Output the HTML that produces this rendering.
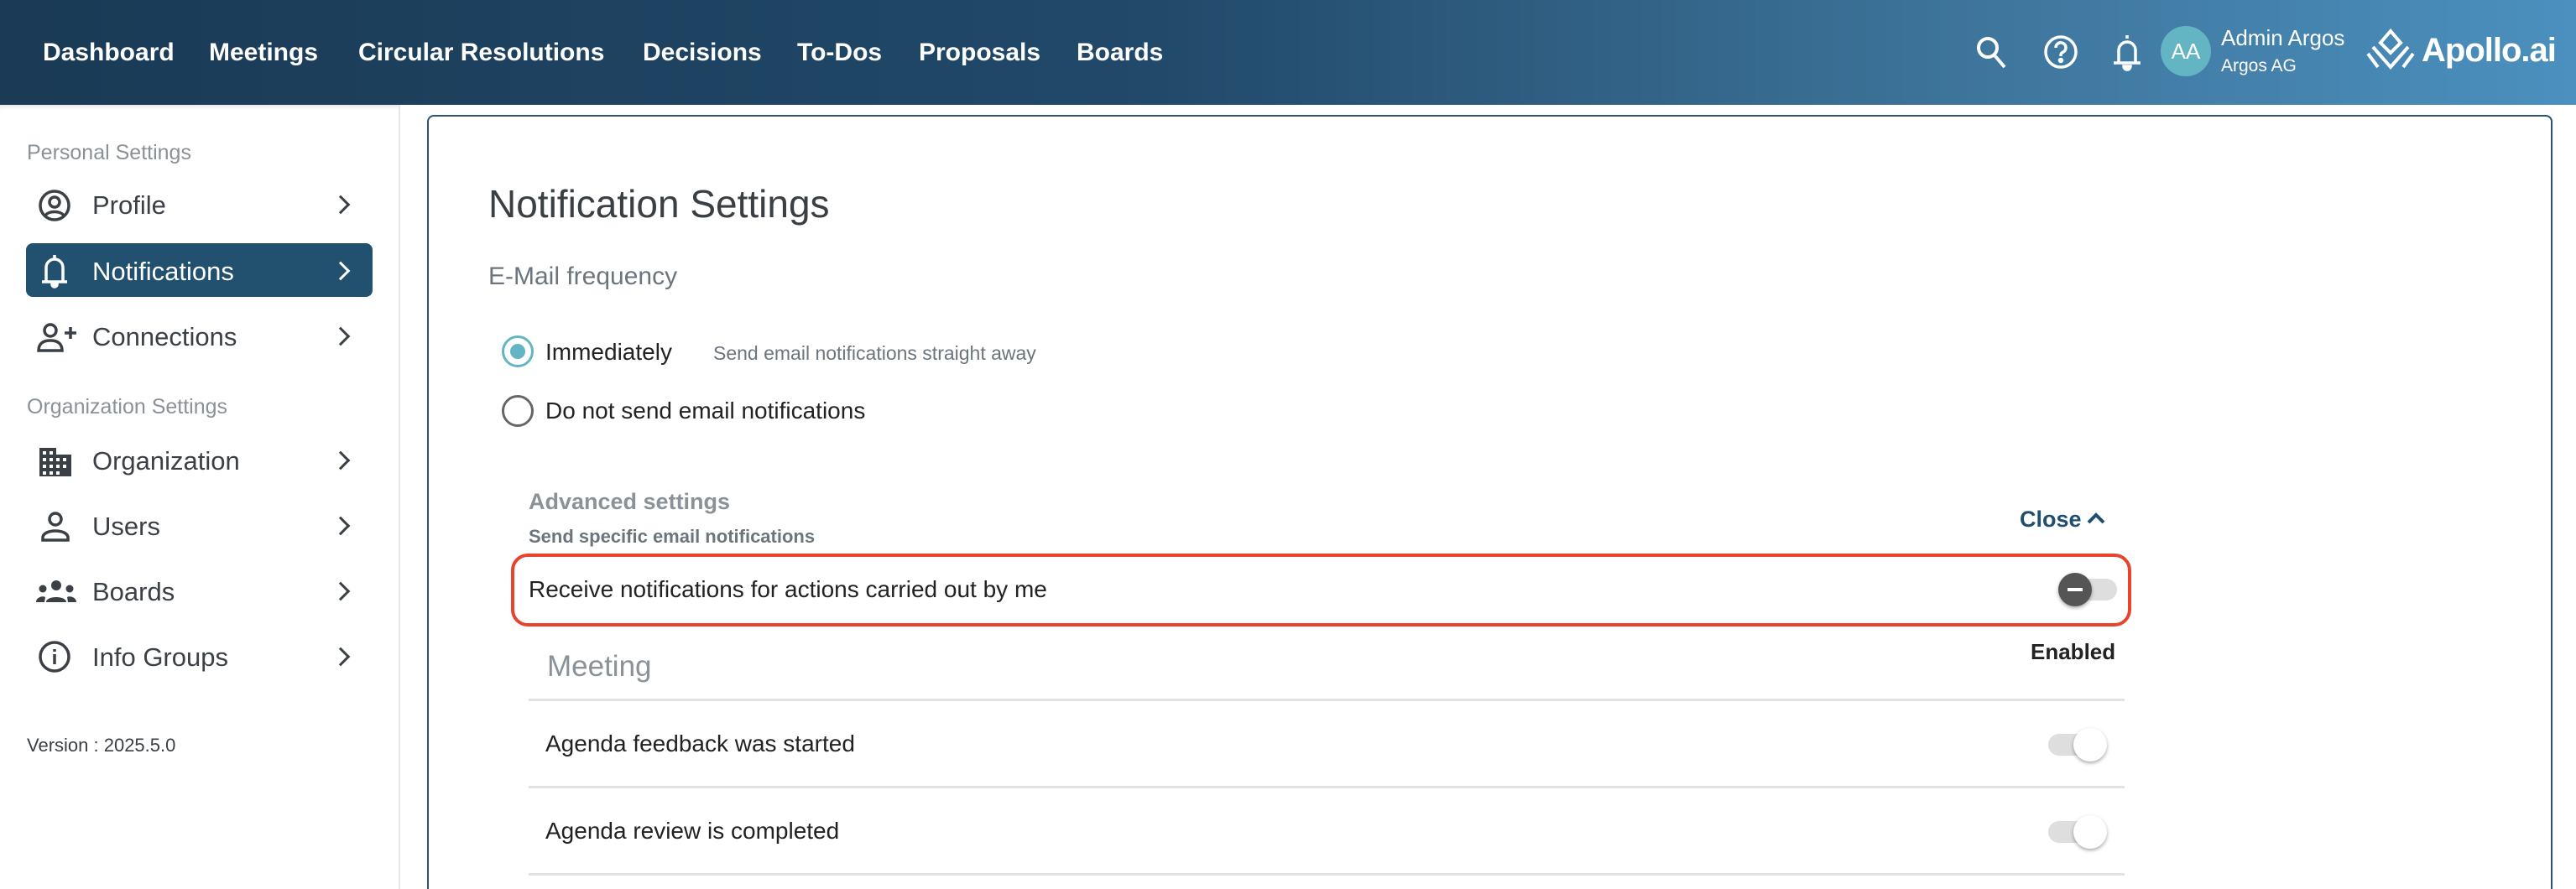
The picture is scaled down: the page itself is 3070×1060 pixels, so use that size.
<!DOCTYPE html>
<html style="overflow:hidden;height:1060px"><head><meta charset="utf-8"><style>
*{margin:0;padding:0;box-sizing:border-box}
body{width:3070px;height:1060px;overflow:hidden;background:#fff;font-family:"Liberation Sans",sans-serif;position:relative}
.a{position:absolute;white-space:nowrap}
.hdr{position:absolute;left:0;top:0;width:3070px;height:125px;background:linear-gradient(90deg,#1a3a55 0%,#21496a 45%,#3d7399 75%,#4b90bf 100%)}
.nav{color:#fff;font-size:30px;top:46px;font-weight:600}
.side{position:absolute;left:0;top:125px;width:477px;height:935px;border-right:2px solid #e6e6e6;box-shadow:inset 0 6px 6px -4px rgba(0,0,0,.12)}
.sec{color:#8a9199;font-size:25px}
.item{font-size:31px;color:#3b4046}
.chev{position:absolute;left:398px;width:16px;height:16px;border-right:3px solid #3b4046;border-bottom:3px solid #3b4046;transform:rotate(-45deg)}
.card{position:absolute;left:509px;top:137px;width:2533px;height:940px;border:2px solid #2a5474;border-bottom:none;border-radius:8px 8px 0 0}
.tog{position:absolute;width:70px;height:26px;border-radius:13px;background:#dedede}
.knob{position:absolute;width:40px;height:40px;border-radius:50%;background:#fff;box-shadow:0 2px 4px rgba(0,0,0,.35);top:-7px}
.line{position:absolute;left:630px;width:1902px;height:3px;background:#e2e2e2}
.row{font-size:28px;color:#222}
</style></head><body>
<div class="hdr"></div>
<div class="a nav" style="left:51px">Dashboard</div>
<div class="a nav" style="left:249px">Meetings</div>
<div class="a nav" style="left:427px">Circular Resolutions</div>
<div class="a nav" style="left:766px">Decisions</div>
<div class="a nav" style="left:950px">To-Dos</div>
<div class="a nav" style="left:1095px">Proposals</div>
<div class="a nav" style="left:1283px">Boards</div>
<svg class="a" style="left:2352px;top:40px" width="44" height="44" viewBox="0 0 44 44" fill="none" stroke="#fff" stroke-width="4"><circle cx="17" cy="17" r="11"/><path d="M25 26l12 14"/></svg>
<svg class="a" style="left:2434px;top:40px" width="44" height="44" viewBox="0 0 44 44" fill="none" stroke="#fff" stroke-width="3.5"><circle cx="22" cy="22" r="18"/><path d="M16 17a6 6 0 1 1 8 5.5c-2 1-2 2.5-2 4.5"/><circle cx="22" cy="32" r="1.5" fill="#fff"/></svg>
<svg class="a" style="left:2514px;top:38px" width="42" height="48" viewBox="0 0 42 48" fill="none" stroke="#fff" stroke-width="3.5"><path d="M21 4v4M11 36V22a10 10 0 0 1 20 0v14M5 37h32"/><path d="M17 41a4 4 0 0 0 8 0z" fill="#fff"/></svg>
<div class="a" style="left:2575px;top:31px;width:60px;height:60px;border-radius:50%;background:#63b5c4;color:#fff;font-size:26px;line-height:60px;text-align:center">AA</div>
<div class="a" style="left:2647px;top:30px;color:#fff;font-size:26px">Admin Argos</div>
<div class="a" style="left:2647px;top:67px;color:#fff;font-size:21px">Argos AG</div>
<svg class="a" style="left:2820px;top:34px" width="58" height="54" viewBox="0 0 58 54" fill="none" stroke="#fff" stroke-width="4"><path d="M29 3L17 17l12 12 12-12z M8 22l21 24 21-24 M2 30l12 16M56 30L44 46"/></svg>
<div class="a" style="left:2886px;top:38px;color:#fff;font-size:40px;font-weight:700;letter-spacing:-1px">Apollo.ai</div>

<div class="side"></div>
<div class="a sec" style="left:32px;top:168px">Personal Settings</div>
<svg class="a" style="left:45px;top:225px" width="40" height="40" viewBox="0 0 40 40" fill="none" stroke="#3b4046" stroke-width="3.5"><circle cx="20" cy="20" r="17"/><circle cx="20" cy="16" r="6"/><path d="M9 32c4-6 18-6 22 0"/></svg>
<div class="a item" style="left:110px;top:227px">Profile</div><div class="chev" style="top:236px"></div>
<div class="a" style="left:31px;top:290px;width:413px;height:64px;background:#22506f;border-radius:8px"></div>
<svg class="a" style="left:47px;top:301px" width="36" height="44" viewBox="0 0 36 44" fill="none" stroke="#fff" stroke-width="3.5"><path d="M18 3v4M8 34V18a10 10 0 0 1 20 0v16M3 35h30"/><path d="M15 38a3 3 0 0 0 6 0z" fill="#fff"/></svg>
<div class="a item" style="left:110px;top:306px;color:#fff">Notifications</div><div class="chev" style="top:315px;border-color:#fff"></div>
<svg class="a" style="left:42px;top:382px" width="52" height="40" viewBox="0 0 52 40" fill="none" stroke="#3b4046" stroke-width="3.5"><circle cx="18" cy="12" r="7"/><path d="M4 36c0-9 6-12 14-12s14 3 14 12z"/><path d="M42 8v14M35 15h14"/></svg>
<div class="a item" style="left:110px;top:384px">Connections</div><div class="chev" style="top:393px"></div>
<div class="a sec" style="left:32px;top:471px">Organization Settings</div>
<svg class="a" style="left:45px;top:532px" width="42" height="38" viewBox="0 0 42 38" fill="#3b4046"><path d="M2 36V2h20v8h18v26z M6 6v4h4V6z M14 6v4h4V6z M6 14v4h4v-4z M14 14v4h4v-4z M6 22v4h4v-4z M14 22v4h4v-4z M6 30v4h4v-4z M14 30v4h4v-4z M22 14v4h4v-4z M22 22v4h4v-4z M22 30v4h4v-4zM30 14v4h4v-4zM30 22v4h4v-4z" fill-rule="evenodd"/></svg>
<div class="a item" style="left:110px;top:532px">Organization</div><div class="chev" style="top:541px"></div>
<svg class="a" style="left:47px;top:608px" width="38" height="40" viewBox="0 0 38 40" fill="none" stroke="#3b4046" stroke-width="3.5"><circle cx="19" cy="11" r="7"/><path d="M4 36v-3c0-5 7-8 15-8s15 3 15 8v3z"/></svg>
<div class="a item" style="left:110px;top:610px">Users</div><div class="chev" style="top:619px"></div>
<svg class="a" style="left:42px;top:690px" width="50" height="30" viewBox="0 0 50 30" fill="#3b4046"><circle cx="25" cy="8" r="6"/><circle cx="9" cy="12" r="4.5"/><circle cx="41" cy="12" r="4.5"/><path d="M13 28c0-8 24-8 24 0zM1 28c0-6 8-8 11-6l-1 6zM49 28c0-6-8-8-11-6l1 6z"/></svg>
<div class="a item" style="left:110px;top:688px">Boards</div><div class="chev" style="top:697px"></div>
<svg class="a" style="left:45px;top:763px" width="40" height="40" viewBox="0 0 40 40" fill="none" stroke="#3b4046" stroke-width="3.5"><circle cx="20" cy="20" r="17"/><path d="M20 17v12M20 11v3"/></svg>
<div class="a item" style="left:110px;top:766px">Info Groups</div><div class="chev" style="top:775px"></div>
<div class="a" style="left:32px;top:876px;font-size:22px;color:#3b4046">Version : 2025.5.0</div>

<div class="card"></div>
<div class="a" style="left:582px;top:216px;font-size:46px;color:#3a3f44">Notification Settings</div>
<div class="a" style="left:582px;top:313px;font-size:30px;color:#6c757d">E-Mail frequency</div>
<div class="a" style="left:598px;top:400px;width:38px;height:38px;border-radius:50%;border:3px solid #63b5c4"><div style="margin:7px;width:18px;height:18px;border-radius:50%;background:#63b5c4"></div></div>
<div class="a" style="left:650px;top:404px;font-size:28px;color:#222">Immediately</div>
<div class="a" style="left:850px;top:408px;font-size:23px;color:#6c757d">Send email notifications straight away</div>
<div class="a" style="left:598px;top:471px;width:38px;height:38px;border-radius:50%;border:3px solid #666"></div>
<div class="a" style="left:650px;top:474px;font-size:28px;color:#222">Do not send email notifications</div>
<div class="a" style="left:630px;top:583px;font-size:27px;font-weight:700;color:#8a9199">Advanced settings</div>
<div class="a" style="left:630px;top:627px;font-size:22px;font-weight:700;color:#6c757d">Send specific email notifications</div>
<div class="a" style="left:2407px;top:604px;font-size:27px;font-weight:700;color:#1f4e70">Close</div>
<svg class="a" style="left:2486px;top:608px" width="24" height="20" viewBox="0 0 24 20" fill="none" stroke="#1f4e70" stroke-width="4"><path d="M3 15l9-9 9 9"/></svg>
<div class="a" style="left:609px;top:660px;width:1931px;height:87px;border:4px solid #e8432d;border-radius:20px"></div>
<div class="a row" style="left:630px;top:687px">Receive notifications for actions carried out by me</div>
<div class="tog" style="left:2453px;top:690px"><div class="knob" style="left:0;background:#555"><div style="position:absolute;left:11px;top:18px;width:18px;height:4px;background:#fff"></div></div></div>
<div class="a" style="left:2420px;top:762px;font-size:26px;font-weight:700;color:#222">Enabled</div>
<div class="a" style="left:652px;top:775px;font-size:35px;color:#8a9199">Meeting</div>
<div class="line" style="top:833px"></div>
<div class="a row" style="left:650px;top:871px">Agenda feedback was started</div>
<div class="tog" style="left:2441px;top:875px"><div class="knob" style="left:30px"></div></div>
<div class="line" style="top:937px"></div>
<div class="a row" style="left:650px;top:975px">Agenda review is completed</div>
<div class="tog" style="left:2441px;top:979px"><div class="knob" style="left:30px"></div></div>
<div class="line" style="top:1041px"></div>
</body></html>
